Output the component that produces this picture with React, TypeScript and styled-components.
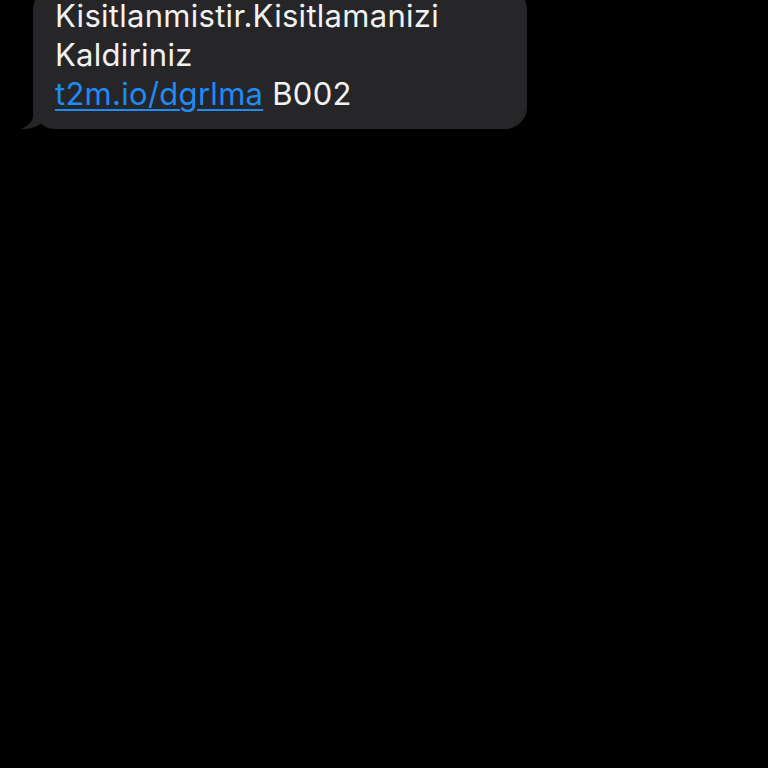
import React from 'react';
import styled, { createGlobalStyle } from 'styled-components';

const GlobalStyle = createGlobalStyle`
  html, body {
    margin: 0;
    padding: 0;
    background: #000;
    overflow: hidden;
  }
  #root {
    min-height: 768px;
    background: #000;
  }
`;

const Thread = styled.div`
  display: flex;
  flex-direction: column;
  align-items: flex-start;
  padding-left: 33px;
  margin-top: -12px;
`;

const Bubble = styled.div`
  position: relative;
  width: 494px;
  box-sizing: border-box;
  padding: 8px 20px 16px 22px;
  background: #262628;
  border-radius: 22px;
  color: #f2f2f2;
  font-family: Inter, 'Noto Sans', 'Liberation Sans', sans-serif;
  font-size: 31px;
  line-height: 39px;
  letter-spacing: 0.28px;
`;

const Line = styled.div`
  white-space: nowrap;
`;

const Link = styled.a`
  color: #1f8bf5;
  text-decoration: underline;
  text-decoration-thickness: 2px;
  text-underline-offset: 4px;
`;

const Tail = styled.svg`
  position: absolute;
  left: -12px;
  bottom: 0;
  width: 30px;
  height: 26px;
`;

export default function App() {
  return (
    <>
      <GlobalStyle />
      <Thread>
        <Bubble>
          <Tail viewBox="0 0 30 26">
            <path d="M12 0 L12 12 C12 19 7 23 0 26 C9 26 16 24 20 20 C24 23 28 25 30 26 L30 0 Z" fill="#262628" />
          </Tail>
          <Line>Kisitlanmistir.Kisitlamanizi</Line>
          <Line>Kaldiriniz</Line>
          <Line>
            <Link href="#">t2m.io/dgrlma</Link> B002
          </Line>
        </Bubble>
      </Thread>
    </>
  );
}
